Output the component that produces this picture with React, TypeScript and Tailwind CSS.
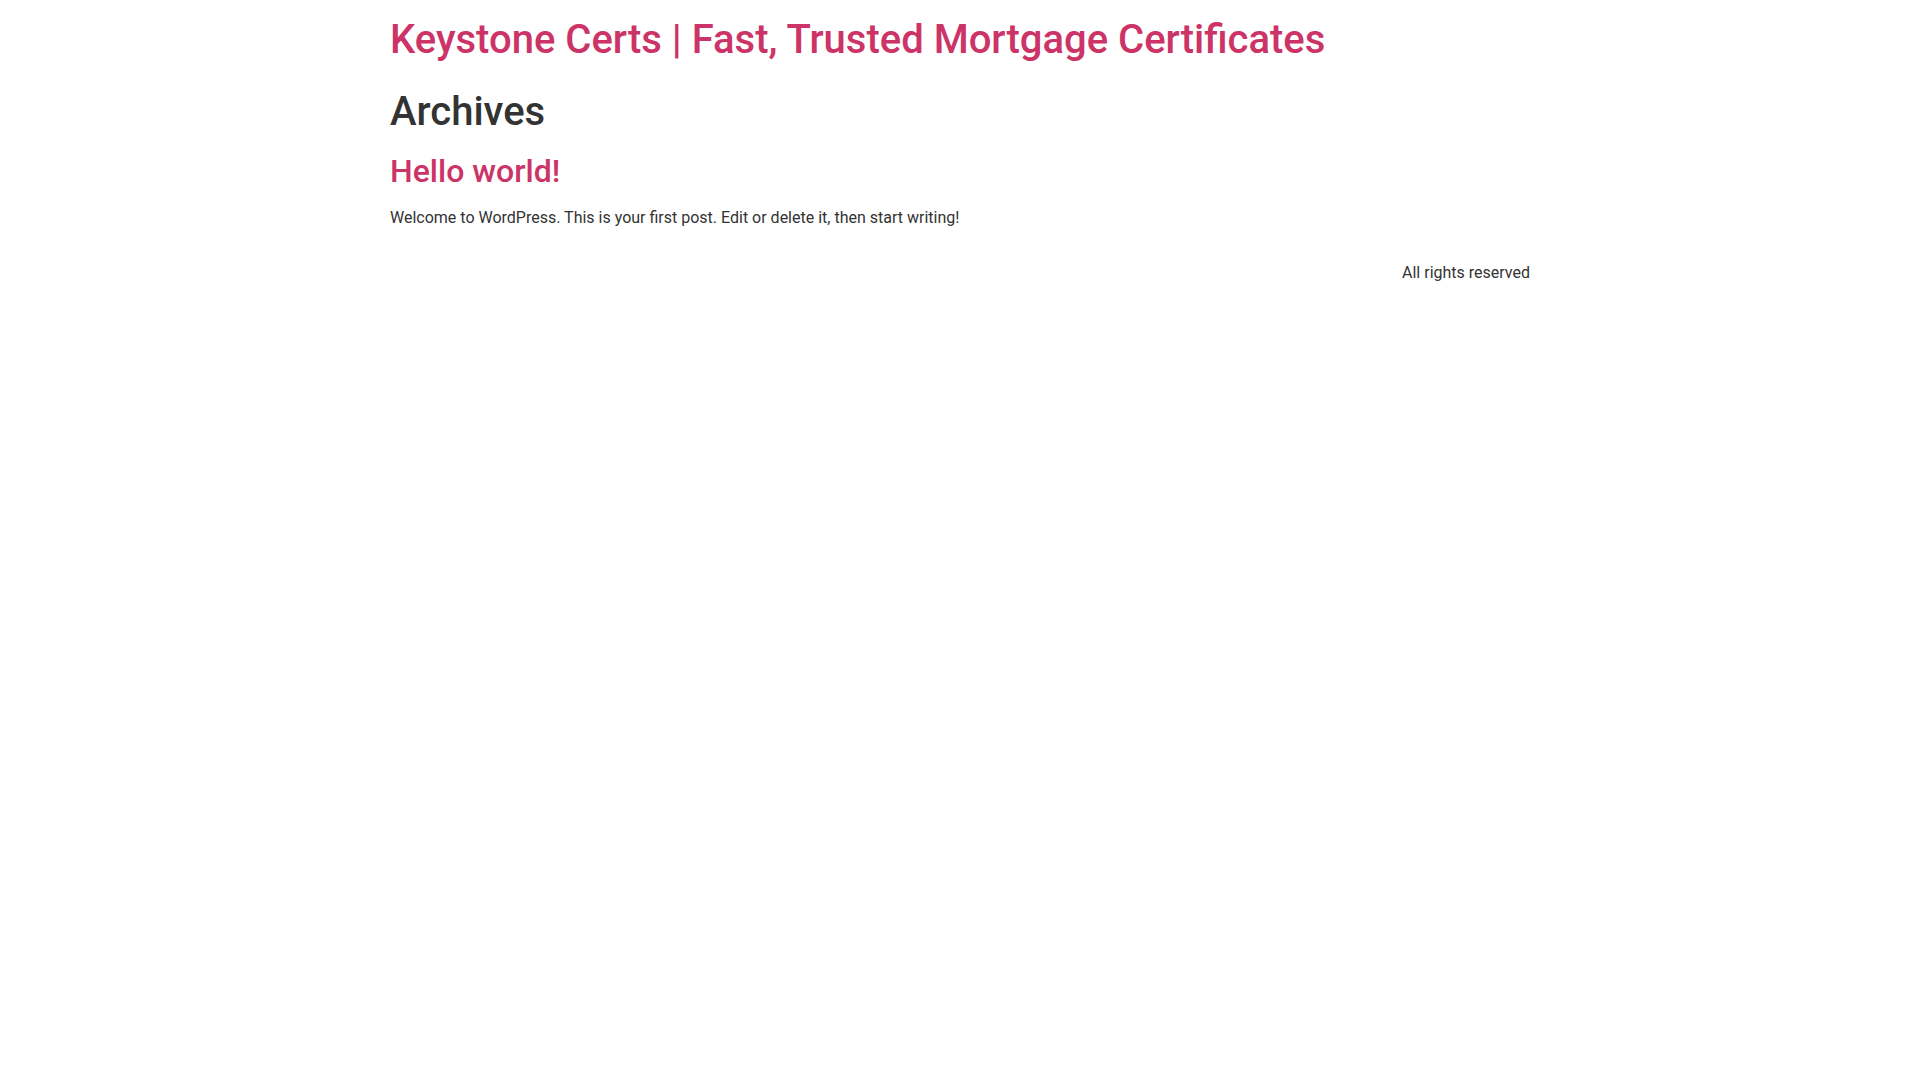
export default function App() {
  return (
    <div className="min-h-screen bg-white text-[#333333] font-['Roboto',sans-serif] text-base leading-normal">
      <header className="mx-auto max-w-[1140px] pt-4">
        <h1 className="text-[40px] leading-[1.2] font-medium">
          <a href="#" className="text-[#cc3366]">Keystone Certs | Fast, Trusted Mortgage Certificates</a>
        </h1>
      </header>

      <main className="mx-auto max-w-[1140px]">
        <div className="mt-6">
          <h1 className="text-[40px] leading-[1.2] font-medium text-[#333333]">Archives</h1>
        </div>
        <article className="mt-4">
          <h2 className="text-[32px] leading-[1.2] font-medium">
            <a href="#" className="text-[#cc3366]">Hello world!</a>
          </h2>
          <p className="mt-4">Welcome to WordPress. This is your first post. Edit or delete it, then start writing!</p>
        </article>
      </main>

      <footer className="mx-auto max-w-[1140px] mt-[31px] flex justify-end">
        <p>All rights reserved</p>
      </footer>
    </div>
  );
}
